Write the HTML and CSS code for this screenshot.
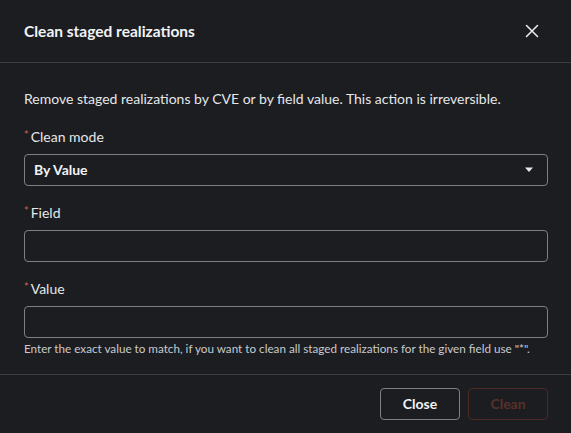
FILE: index.html
```html
<!DOCTYPE html>
<html>
<head>
<meta charset="utf-8">
<link rel="stylesheet" href="styles.css">
</head>
<body>
<div class="dialog">
  <div class="header">
    <h1 class="title">Clean staged realizations</h1>
    <button class="close-x" aria-label="Close">
      <svg width="14" height="14" viewBox="0 0 14 14"><path d="M1.5 1.5 L12.5 12.5 M12.5 1.5 L1.5 12.5" stroke="#e8e8e8" stroke-width="1.6" stroke-linecap="round"/></svg>
    </button>
  </div>
  <div class="body">
    <p class="desc">Remove staged realizations by CVE or by field value. This action is irreversible.</p>
    <div class="field">
      <label class="label"><span class="req">*</span>Clean mode</label>
      <div class="select">
        <span class="select-value">By Value</span>
        <svg width="10" height="6" viewBox="0 0 10 6"><path d="M1 0.5 L9 0.5 L5 5 Z" fill="#e8e8e8"/></svg>
      </div>
    </div>
    <div class="field">
      <label class="label"><span class="req">*</span>Field</label>
      <div class="input"></div>
    </div>
    <div class="field last">
      <label class="label"><span class="req">*</span>Value</label>
      <div class="input"></div>
      <div class="help">Enter the exact value to match, if you want to clean all staged realizations for the given field use "*".</div>
    </div>
  </div>
  <div class="footer">
    <button class="btn btn-close">Close</button>
    <button class="btn btn-clean">Clean</button>
  </div>
</div>
</body>
</html>
```
FILE: styles.css
```css
* { box-sizing: border-box; }
html, body { margin: 0; padding: 0; background: #1b1d21; }
body { font-family: Lato, "Liberation Sans", sans-serif; color: #e6e7e9; }
.dialog { width: 571px; height: 433px; background: #1b1d21; display: flex; flex-direction: column; }
.header { height: 66px; border-bottom: 1px solid #3b3d42; display: flex; align-items: center; justify-content: space-between; padding: 0 32px 0 24px; }
.title { margin: 0; font-size: 15.5px; font-weight: 700; color: #f2f3f5; }
.close-x { background: none; border: 0; padding: 0; width: 14px; height: 14px; display: flex; cursor: pointer; }
.body { padding: 28px 23px 0 24px; flex: 1; }
.desc { margin: 0 0 22px; font-size: 14px; line-height: 16px; color: #e6e7e9; }
.field { margin-bottom: 19px; }
.label { display: flex; align-items: flex-start; font-size: 14px; line-height: 16px; margin-bottom: 9px; color: #e6e7e9; }
.req { color: #d0634c; font-size: 11px; line-height: 11px; margin-right: 2px; }
.select, .input { height: 32px; border: 1px solid #7c7f86; border-radius: 4px; background: #1b1d21; }
.select { display: flex; align-items: center; justify-content: space-between; padding: 0 13px 0 9px; }
.select-value { font-size: 14px; font-weight: 700; color: #f2f3f5; }
.help { font-size: 11.7px; line-height: 14px; margin-top: 3px; color: #c9cacd; }
.footer { height: 62px; border-top: 1px solid #3b3d42; display: flex; justify-content: flex-end; align-items: center; gap: 8px; padding: 0 23px 0 0; }
.btn { width: 80px; height: 32px; border-radius: 4px; background: transparent; font-family: inherit; font-size: 14px; font-weight: 700; }
.btn-close { border: 1px solid #7c7f86; color: #f2f3f5; }
.btn-clean { border: 1px solid #4d2a24; color: #5a3128; }
```
